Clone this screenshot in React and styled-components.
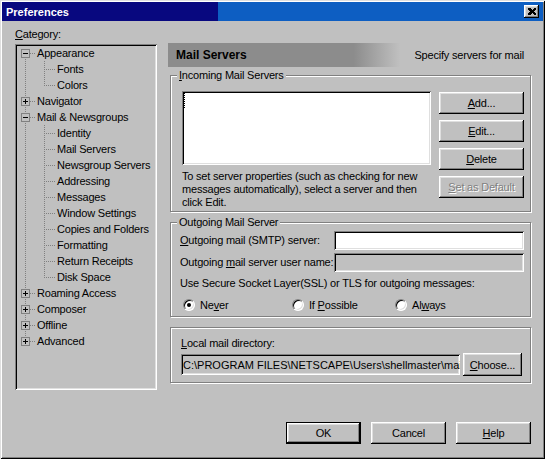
import React from 'react';
import styled, { createGlobalStyle, css } from 'styled-components';

const GlobalStyle = createGlobalStyle`
  html, body { margin: 0; padding: 0; background: #c0c0c0; }
  body { font-family: "Liberation Sans", Arial, sans-serif; font-size: 11px; }
`;

const raised = css`
  box-shadow: inset -1px -1px #000, inset 1px 1px #fff, inset -2px -2px #808080, inset 2px 2px #dfdfdf;
`;

const sunken = css`
  box-shadow: inset 1px 1px #808080, inset -1px -1px #fff, inset 2px 2px #000, inset -2px -2px #dfdfdf;
`;

const Window = styled.div`
  width: 545px;
  height: 459px;
  box-sizing: border-box;
  padding: 2px;
  background: #c0c0c0;
  box-shadow: inset 1px 1px #dfdfdf, inset -1px -1px #000, inset 2px 2px #fff, inset -2px -2px #808080;
  display: flex;
  flex-direction: column;
  font-family: "Liberation Sans", Arial, sans-serif;
  font-size: 11px;
  letter-spacing: -0.2px;
  color: #000;
`;

const TitleBar = styled.div`
  height: 19px;
  display: flex;
  align-items: center;
  justify-content: space-between;
  padding: 0 4px 0 4px;
  background: linear-gradient(90deg, #08087f 0, #08087f 40%, #0d5ec2 40%, #0d5ec2 100%);
`;

const Title = styled.span`
  color: #fff;
  font-weight: bold;
  letter-spacing: 0;
`;

const CloseBtn = styled.div`
  width: 15px;
  height: 13px;
  background: #c0c0c0;
  ${raised};
  display: flex;
  align-items: center;
  justify-content: center;
`;

const Body = styled.div`
  flex: 1;
  display: flex;
  flex-direction: column;
  padding: 7px 11px 0 13px;
`;

const Main = styled.div`
  display: flex;
  gap: 11px;
`;

const LeftCol = styled.div`
  width: 142px;
  display: flex;
  flex-direction: column;
`;

const Label = styled.div`
  line-height: 13px;
  white-space: nowrap;
  margin-top: ${p => p.$mt || 0}px;
  margin-bottom: ${p => p.$mb || 0}px;
`;

const Tree = styled.div`
  height: 346px;
  box-sizing: border-box;
  padding: 1px 2px 2px 2px;
  ${sunken};
  overflow: hidden;
`;

const TreeRow = styled.div`
  height: 16px;
  display: flex;
  align-items: center;
  white-space: nowrap;
  line-height: 16px;
`;

const RightCol = styled.div`
  width: 364px;
  padding-top: 15px;
  display: flex;
  flex-direction: column;
`;

const HeaderRow = styled.div`
  height: 24px;
  display: flex;
  align-items: center;
`;

const HeaderTitle = styled.div`
  width: 232px;
  height: 24px;
  box-sizing: border-box;
  padding-left: 8px;
  display: flex;
  align-items: center;
  font-size: 12px;
  font-weight: bold;
  letter-spacing: 0;
  background: linear-gradient(90deg, #8c8c8c 0, #8c8c8c 80%, #c0c0c0 100%);
`;

const HeaderDesc = styled.div`
  margin-left: auto;
  margin-right: 8px;
`;

const Group = styled.fieldset`
  margin: ${p => p.$mt || 0}px 1px 0 2px;
  padding: 0;
  border: 1px solid #808080;
  box-shadow: inset 1px 1px #fff, 1px 1px #fff;
  min-width: 0;
`;

const Legend = styled.legend`
  margin-left: 6px;
  padding: 0 2px;
  line-height: 13px;
  background: #c0c0c0;
`;

const IncomingBody = styled.div`
  padding: 9px 7px 2px 11px;
  display: grid;
  grid-template-columns: 249px 85px;
  column-gap: 8px;
`;

const ListBox = styled.div`
  height: 74px;
  box-sizing: border-box;
  padding: 2px;
  background: #fff;
  ${sunken};
`;

const FocusMark = styled.div`
  width: 0;
  height: 15px;
  border-left: 1px dotted #000;
`;

const HelpText = styled.div`
  margin-top: 5px;
  line-height: 13px;
`;

const ButtonStack = styled.div`
  display: flex;
  flex-direction: column;
  gap: 6px;
  padding-top: 1px;
`;

const Button = styled.div`
  width: ${p => p.$w || 85}px;
  height: ${p => p.$h || 22}px;
  box-sizing: border-box;
  display: flex;
  align-items: center;
  justify-content: center;
  background: #c0c0c0;
  white-space: nowrap;
  flex-shrink: 0;
  ${raised};
  ${p => p.$default && css`
    border: 1px solid #000;
  `}
  ${p => p.$disabled && css`
    color: #808080;
    text-shadow: 1px 1px #fff;
  `}
`;

const Key = styled.u`
  text-decoration: underline;
  text-underline-offset: 1px;
`;

const OutgoingBody = styled.div`
  padding: 2px 7px 5px 9px;
  display: flex;
  flex-direction: column;
`;

const FieldRow = styled.div`
  display: grid;
  grid-template-columns: 154px 190px;
  align-items: center;
  margin-top: ${p => p.$mt || 0}px;
`;

const Input = styled.div`
  height: ${p => p.$h || 19}px;
  box-sizing: border-box;
  padding: 0 2px;
  display: flex;
  align-items: center;
  overflow: hidden;
  white-space: nowrap;
  flex: ${p => (p.$grow ? 1 : 'none')};
  background: ${p => (p.$disabled ? '#c0c0c0' : '#fff')};
  ${sunken};
`;

const PathText = styled.span`
  letter-spacing: 0;
`;

const RadioRow = styled.div`
  margin-top: 8px;
  height: 13px;
  padding-left: 3px;
  display: grid;
  grid-template-columns: 109px 103px auto;
  align-items: center;
`;

const RadioOption = styled.div`
  display: flex;
  align-items: center;
  gap: 5px;
  white-space: nowrap;
`;

const Radio = styled.span`
  width: 12px;
  height: 12px;
  box-sizing: border-box;
  border-radius: 50%;
  background: #fff;
  border: 1px solid;
  border-color: #808080 #fff #fff #808080;
  box-shadow: inset 1px 1px #000, inset -1px -1px #dfdfdf;
  display: inline-flex;
  align-items: center;
  justify-content: center;
  &::after {
    content: '';
    width: 4px;
    height: 4px;
    border-radius: 50%;
    background: ${p => (p.$checked ? '#000' : 'transparent')};
  }
`;

const LocalBody = styled.div`
  padding: 9px 8px 6px 10px;
`;

const DirRow = styled.div`
  display: flex;
  align-items: center;
  gap: 3px;
`;

const Footer = styled.div`
  margin-top: 32px;
  display: flex;
  justify-content: flex-end;
  gap: 10px;
  padding-right: 1px;
`;

const tree = [
  { label: 'Appearance', children: ['Fonts', 'Colors'] },
  { label: 'Navigator', closed: true },
  {
    label: 'Mail & Newsgroups',
    children: [
      'Identity', 'Mail Servers', 'Newsgroup Servers', 'Addressing', 'Messages',
      'Window Settings', 'Copies and Folders', 'Formatting', 'Return Receipts', 'Disk Space',
    ],
  },
  { label: 'Roaming Access', closed: true },
  { label: 'Composer', closed: true },
  { label: 'Offline', closed: true },
  { label: 'Advanced', closed: true },
];

const dot = { stroke: '#808080', strokeWidth: 1, strokeDasharray: '1 1' };

const RootLines = ({ first, last, closed }) => (
  <svg width="20" height="16" shapeRendering="crispEdges" style={{ flexShrink: 0 }}>
    <line x1="8.5" y1={first ? 8 : 0} x2="8.5" y2={last ? 8 : 16} {...dot} />
    <line x1="13" y1="8.5" x2="19" y2="8.5" {...dot} />
    <rect x="4.5" y="4.5" width="8" height="8" fill="#c0c0c0" stroke="#808080" />
    <line x1="6" y1="8.5" x2="11" y2="8.5" stroke="#000" />
    {closed && <line x1="8.5" y1="6" x2="8.5" y2="11" stroke="#000" />}
  </svg>
);

const ChildLines = ({ last }) => (
  <svg width="40" height="16" shapeRendering="crispEdges" style={{ flexShrink: 0 }}>
    <line x1="8.5" y1="0" x2="8.5" y2="16" {...dot} />
    <line x1="27.5" y1="0" x2="27.5" y2={last ? 9 : 16} {...dot} />
    <line x1="29" y1="8.5" x2="38" y2="8.5" {...dot} />
  </svg>
);

const CategoryTree = () => (
  <Tree>
    {tree.map((node, i) => (
      <React.Fragment key={node.label}>
        <TreeRow>
          <RootLines first={i === 0} last={i === tree.length - 1} closed={node.closed} />
          {node.label}
        </TreeRow>
        {(node.children || []).map((c, j) => (
          <TreeRow key={c}>
            <ChildLines last={j === node.children.length - 1} />
            {c}
          </TreeRow>
        ))}
      </React.Fragment>
    ))}
  </Tree>
);

export default function App() {
  return (
    <>
      <GlobalStyle />
      <Window>
        <TitleBar>
          <Title>Preferences</Title>
          <CloseBtn>
            <svg width="8" height="7" shapeRendering="crispEdges">
              <path d="M0 0h2l2 2 2-2h2v1L6 3.5 8 6v1H6L4 5 2 7H0V6l2-2.5L0 1z" fill="#000" />
            </svg>
          </CloseBtn>
        </TitleBar>
        <Body>
          <Main>
            <LeftCol>
              <Label $mb={3}><Key>C</Key>ategory:</Label>
              <CategoryTree />
            </LeftCol>
            <RightCol>
              <HeaderRow>
                <HeaderTitle>Mail Servers</HeaderTitle>
                <HeaderDesc>Specify servers for mail</HeaderDesc>
              </HeaderRow>
              <Group $mt={2}>
                <Legend><Key>I</Key>ncoming Mail Servers</Legend>
                <IncomingBody>
                  <div>
                    <ListBox>
                      <FocusMark />
                    </ListBox>
                    <HelpText>
                      To set server properties (such as checking for new<br />
                      messages automatically), select a server and then<br />
                      click Edit.
                    </HelpText>
                  </div>
                  <ButtonStack>
                    <Button><span><Key>A</Key>dd...</span></Button>
                    <Button><span><Key>E</Key>dit...</span></Button>
                    <Button><span><Key>D</Key>elete</span></Button>
                    <Button $disabled><span><Key>S</Key>et as Default</span></Button>
                  </ButtonStack>
                </IncomingBody>
              </Group>
              <Group $mt={4}>
                <Legend>Outgoing Mail Server</Legend>
                <OutgoingBody>
                  <FieldRow>
                    <Label><Key>O</Key>utgoing mail (SMTP) server:</Label>
                    <Input />
                  </FieldRow>
                  <FieldRow $mt={3}>
                    <Label>Outgoing <Key>m</Key>ail server user name:</Label>
                    <Input $disabled />
                  </FieldRow>
                  <Label $mt={5}>
                    Use Secure Socket Layer(SSL) or TLS for outgoing messages:
                  </Label>
                  <RadioRow>
                    <RadioOption><Radio $checked /><span>Ne<Key>v</Key>er</span></RadioOption>
                    <RadioOption><Radio /><span>If <Key>P</Key>ossible</span></RadioOption>
                    <RadioOption><Radio /><span>Al<Key>w</Key>ays</span></RadioOption>
                  </RadioRow>
                </OutgoingBody>
              </Group>
              <Group $mt={10}>
                <LocalBody>
                  <Label $mb={3}><Key>L</Key>ocal mail directory:</Label>
                  <DirRow>
                    <Input $disabled $grow $h={21}>
                      <PathText>C:\PROGRAM FILES\NETSCAPE\Users\shellmaster\mail</PathText>
                    </Input>
                    <Button $w={59} $h={23}><span><Key>C</Key>hoose...</span></Button>
                  </DirRow>
                </LocalBody>
              </Group>
            </RightCol>
          </Main>
          <Footer>
            <Button $w={75} $default>OK</Button>
            <Button $w={75}>Cancel</Button>
            <Button $w={75}><span><Key>H</Key>elp</span></Button>
          </Footer>
        </Body>
      </Window>
    </>
  );
}
